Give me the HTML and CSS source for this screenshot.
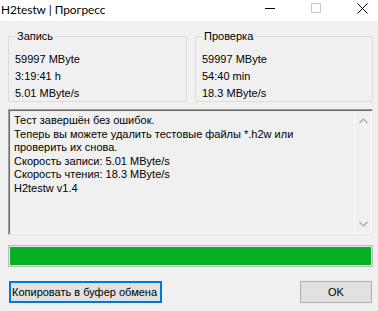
FILE: index.html
```html
<!DOCTYPE html>
<html>
<head>
<meta charset="utf-8">
<link rel="stylesheet" href="styles.css">
</head>
<body>
<div class="window">
  <div class="titlebar">
    <span class="title">H2testw | Прогресс</span>
    <div class="caption">
      <span class="cbtn"><svg width="11" height="11" viewBox="0 0 11 11"><path d="M0 5.5h10" stroke="#000" stroke-width="1"/></svg></span>
      <span class="cbtn"><svg width="11" height="11" viewBox="0 0 11 11"><rect x="0.5" y="0.5" width="9" height="9" fill="none" stroke="#c8c8c8"/></svg></span>
      <span class="cbtn"><svg width="11" height="11" viewBox="0 0 11 11"><path d="M0.5 0.5L10.5 10.5M10.5 0.5L0.5 10.5" stroke="#000" stroke-width="1"/></svg></span>
    </div>
  </div>
  <div class="content">
    <div class="groups">
      <fieldset class="group">
        <legend>Запись</legend>
        <div class="line">59997 MByte</div>
        <div class="line">3:19:41 h</div>
        <div class="line">5.01 MByte/s</div>
      </fieldset>
      <fieldset class="group">
        <legend>Проверка</legend>
        <div class="line">59997 MByte</div>
        <div class="line">54:40 min</div>
        <div class="line">18.3 MByte/s</div>
      </fieldset>
    </div>
    <div class="log">
      <div class="logtext">
        <div>Тест завершён без ошибок.</div>
        <div>Теперь вы можете удалить тестовые файлы *.h2w или</div>
        <div>проверить их снова.</div>
        <div>Скорость записи: 5.01 MByte/s</div>
        <div>Скорость чтения: 18.3 MByte/s</div>
        <div>H2testw v1.4</div>
      </div>
      <div class="scroll">
        <svg width="9" height="6" viewBox="0 0 9 6"><path d="M0.5 5L4.5 1L8.5 5" fill="none" stroke="#a8a8a8" stroke-width="1.2"/></svg>
        <svg width="9" height="6" viewBox="0 0 9 6"><path d="M0.5 1L4.5 5L8.5 1" fill="none" stroke="#a8a8a8" stroke-width="1.2"/></svg>
      </div>
    </div>
    <div class="progress"><div class="fill"></div></div>
    <div class="buttons">
      <button class="btn focused">Копировать в буфер обмена</button>
      <button class="btn ok">OK</button>
    </div>
  </div>
</div>
</body>
</html>
```

FILE: styles.css
```css
html, body {
  margin: 0;
  padding: 0;
}
body {
  width: 378px;
  height: 311px;
  overflow: hidden;
  background: #f0f0f0;
  font-family: "Liberation Sans", Arial, sans-serif;
  font-size: 11px;
  color: #000;
}
.window {
  display: flex;
  flex-direction: column;
  height: 311px;
}
.titlebar {
  height: 21px;
  background: #fff;
  display: flex;
  align-items: center;
  justify-content: space-between;
}
.title {
  font-family: Lato, "Noto Sans", sans-serif;
  font-size: 11.8px;
  padding-left: 1px;
  margin-top: -3px;
}
.caption {
  display: flex;
  margin-top: -4px;
  margin-right: -7px;
}
.cbtn {
  width: 46px;
  display: flex;
  justify-content: center;
}
.content {
  flex: 1;
  display: flex;
  flex-direction: column;
  padding: 9px 5px 0 8px;
}
.groups {
  display: flex;
  gap: 8px;
}
.group {
  margin: 0;
  border: 1px solid #dcdcdc;
  padding: 8px 0 3px 6px;
  min-width: 0;
  height: 72px;
  box-sizing: border-box;
}
.group:first-child {
  width: 179px;
}
.group:last-child {
  width: 178px;
}
.group legend {
  padding: 0 2px;
  margin-left: 0;
  line-height: 13px;
}
.line {
  line-height: 16.9px;
}
.log {
  margin-top: 7px;
  height: 126px;
  box-sizing: border-box;
  border-top: 1px solid #a0a0a0;
  border-left: 1px solid #a0a0a0;
  border-right: 1px solid #e3e3e3;
  border-bottom: 1px solid #e3e3e3;
  box-shadow: inset 1px 1px 0 #696969, inset -1px -1px 0 #fff;
  display: flex;
}
.logtext {
  flex: 1;
  padding: 4px 0 0 5px;
  line-height: 13.5px;
}
.scroll {
  width: 16px;
  border-left: 1px solid #fff;
  margin: 1px 1px 1px 0;
  display: flex;
  flex-direction: column;
  justify-content: space-between;
  align-items: center;
  padding: 7px 0 6px;
}
.progress {
  margin-top: 10px;
  height: 22px;
  box-sizing: border-box;
  border: 1px solid #bcbcbc;
  background: #e6e6e6;
  padding: 1px;
}
.fill {
  height: 100%;
  background: #06b025;
}
.buttons {
  margin-top: 14px;
  display: flex;
  justify-content: space-between;
  padding-right: 1px;
}
.btn {
  font-family: "Liberation Sans", Arial, sans-serif;
  font-size: 11px;
  height: 22px;
  background: #e1e1e1;
  border: 1px solid #adadad;
  margin: 0;
  padding: 0;
  color: #000;
}
.btn.focused {
  width: 153px;
  margin-left: 1px;
  border: 2px solid #0078d7;
  text-align: left;
  padding-left: 1px;
}
.btn.ok {
  width: 72px;
}
```
